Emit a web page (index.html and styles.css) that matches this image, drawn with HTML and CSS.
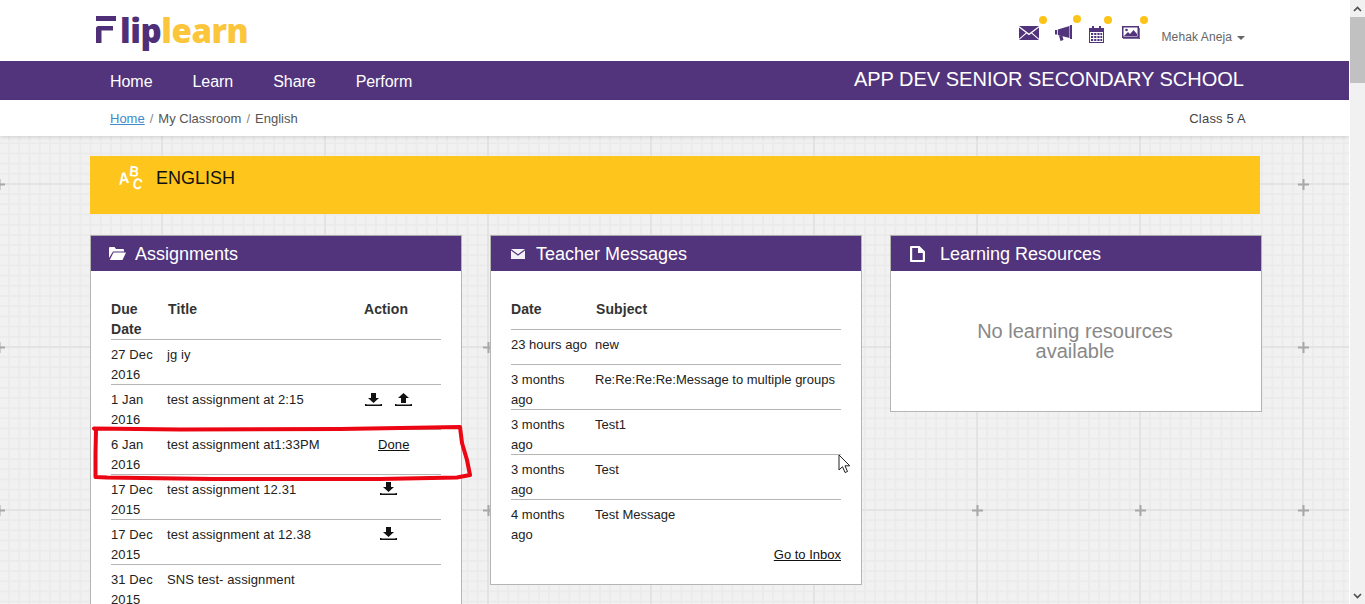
FILE: index.html
```html
<!DOCTYPE html>
<html lang="en">
<head>
<meta charset="utf-8">
<title>Fliplearn - English</title>
<link rel="stylesheet" href="styles.css">
</head>
<body>
<div class="page">
  <div class="main">
    <header class="top">
      <div class="logo"><svg class="logo-f" viewBox="0 0 20 27" width="20" height="27"><path d="M0 27V12.500a2.500 2.500 0 0 1 2.500-2.500H17v4.500H5.500V27zM0 0h20v5H0z" fill="#4f2f78"/></svg><span class="logo-flip">lip</span><span class="logo-learn">learn</span></div>
      <div class="tools">
        <a class="tool tool-mail"><svg viewBox="0 0 20 14" width="20" height="14"><path d="M0 0h20L10 7.600z" fill="#52347c"/><path d="M0 1.400v11.400L6.800 6.700zM20 1.400v11.400l-6.800-6.100zM7.600 7.500 0 14h20l-7.600-6.500L10 9.300z" fill="#52347c"/></svg><i class="dot"></i></a>
        <a class="tool tool-horn"><svg viewBox="0 0 18 16" width="18" height="16"><path d="M0 5h2v4.500H0zM2.800 4.500 14.500 1v12L2.800 10zM4 10.500l3.500.8 1 3.700-3 1z" fill="#52347c"/><path d="M15 0h2v14h-2z" fill="#52347c"/></svg><i class="dot"></i></a>
        <a class="tool tool-cal"><svg viewBox="0 0 15 17" width="15" height="17"><path d="M0 2h15v15H0zM1 6v10h13V6z" fill="#52347c"/><path d="M3 0h2v3H3zM10 0h2v3h-2z" fill="#52347c"/><path d="M2 7h2.200v2H2zM5.200 7h2.200v2H5.200zM8.400 7h2.200v2H8.400zM11.400 7h1.800v2h-1.800zM2 10h2.200v2H2zM5.200 10h2.200v2H5.200zM8.400 10h2.200v2H8.400zM11.400 10h1.800v2h-1.800zM2 13h2.200v2H2zM5.200 13h2.200v2H5.200zM8.400 13h2.200v2H8.400zM11.400 13h1.800v2h-1.800z" fill="#52347c"/></svg><i class="dot"></i></a>
        <a class="tool tool-img"><svg viewBox="0 0 18 15" width="18" height="15"><path d="M0 0h17v12H0zM1.500 1.500v9h14v-9z" fill="#52347c"/><path d="M1 13h17V2h-.7v10.300H1z" fill="#52347c"/><path d="M2 10l4-4 2 2 3.500-4L15 8v2z" fill="#52347c"/><circle cx="4.500" cy="4" r="1.300" fill="#52347c"/></svg><i class="dot"></i></a>
        <a class="user">Mehak Aneja<i class="caret"></i></a>
      </div>
    </header>
    <nav class="nav">
      <ul class="nav-links">
        <li>Home</li>
        <li>Learn</li>
        <li>Share</li>
        <li>Perform</li>
      </ul>
      <div class="school">APP DEV SENIOR SECONDARY SCHOOL</div>
    </nav>
    <div class="crumbs">
      <div class="crumb-list"><a class="crumb-home">Home</a><span class="sep">/</span><span>My Classroom</span><span class="sep">/</span><span>English</span></div>
      <div class="class-name">Class 5 A</div>
    </div>
    <main class="content">
      <section class="banner">
        <svg class="abc" viewBox="0 0 26 26" width="26" height="26"><g fill="#fff" font-family="Liberation Sans, sans-serif" font-weight="700" font-size="13"><text transform="translate(0 21) rotate(-12) skewX(-8) scale(1.15 1.25)">A</text><text transform="translate(10 12) rotate(6) scale(1 1.15)">B</text><text transform="translate(13 24) rotate(12) scale(1 1.2)">C</text></g></svg>
        <h1 class="banner-title">ENGLISH</h1>
      </section>
      <div class="panels">
        <section class="panel panel-assign">
          <h2 class="panel-head"><svg class="ph-icon" viewBox="0 0 17 13" width="17" height="13"><path d="M0 1a1 1 0 0 1 1-1h4.500l1.500 2h7a1 1 0 0 1 1 1v1.500H4L0 11z" fill="#fff"/><path d="M4.500 5.500H17L13.500 13H.8z" fill="#fff"/></svg><span>Assignments</span></h2>
          <div class="panel-body">
            <table class="tbl tbl-a">
              <thead><tr><th class="c-date">Due Date</th><th class="c-title">Title</th><th class="c-act">Action</th></tr></thead>
              <tbody>
                <tr><td>27 Dec 2016</td><td>jg iy</td><td></td></tr>
                <tr><td>1 Jan 2016</td><td>test assignment at 2:15</td><td class="acts acts-two"><svg class="ic" viewBox="0 0 17 13" width="17" height="13"><path d="M6 0h5v5h3l-5.500 5L3 5h3zM0 11h1.500v.5h14V11H17v2H0z" fill="#111"/></svg><svg class="ic" viewBox="0 0 17 13" width="17" height="13"><path d="M6 10h5V5h3L8.500 0 3 5h3zM0 11h1.500v.5h14V11H17v2H0z" fill="#111"/></svg></td></tr>
                <tr><td>6 Jan 2016</td><td>test assignment at1:33PM</td><td class="acts acts-done"><a class="link">Done</a></td></tr>
                <tr><td>17 Dec 2015</td><td>test assignment 12.31</td><td class="acts acts-one"><svg class="ic" viewBox="0 0 17 13" width="17" height="13"><path d="M6 0h5v5h3l-5.500 5L3 5h3zM0 11h1.500v.5h14V11H17v2H0z" fill="#111"/></svg></td></tr>
                <tr><td>17 Dec 2015</td><td>test assignment at 12.38</td><td class="acts acts-one"><svg class="ic" viewBox="0 0 17 13" width="17" height="13"><path d="M6 0h5v5h3l-5.500 5L3 5h3zM0 11h1.500v.5h14V11H17v2H0z" fill="#111"/></svg></td></tr>
                <tr><td>31 Dec 2015</td><td>SNS test- assignment</td><td></td></tr>
              </tbody>
            </table>
          </div>
        </section>
        <section class="panel panel-msg">
          <h2 class="panel-head"><svg class="ph-icon ph-mail" viewBox="0 0 14 10" width="14" height="10"><path d="M0 0h14L7 5.300zM0 1.500v8.500h14V1.500L7 6.800z" fill="#f4f0f8"/></svg><span>Teacher Messages</span></h2>
          <div class="panel-body">
            <table class="tbl tbl-m">
              <thead><tr><th class="m-date">Date</th><th>Subject</th></tr></thead>
              <tbody>
                <tr class="row-short"><td>23 hours ago</td><td>new</td></tr>
                <tr><td>3 months ago</td><td>Re:Re:Re:Re:Message to multiple groups</td></tr>
                <tr><td>3 months ago</td><td>Test1</td></tr>
                <tr><td>3 months ago</td><td>Test</td></tr>
                <tr><td>4 months ago</td><td>Test Message</td></tr>
              </tbody>
            </table>
            <div class="inbox"><a class="link">Go to Inbox</a></div>
          </div>
        </section>
        <section class="panel panel-res">
          <h2 class="panel-head"><svg class="ph-icon ph-file" viewBox="0 0 15 16" width="15" height="16"><path d="M1 0h8.500L15 5.500V15a1 1 0 0 1-1 1H1a1 1 0 0 1-1-1V1a1 1 0 0 1 1-1zm1.200 2v12h10.600V7H8V2z" fill="#fff"/></svg><span>Learning Resources</span></h2>
          <div class="empty">No learning resources<br>available</div>
        </section>
      </div>
    </main>
    <svg class="redmark" viewBox="90 420 385 65" width="385" height="65"><path d="M94 428.500 180 429.500 340 429 460 427 462 443 467 460 470 475 457 477.500 380 479 213 479 107 477.500 95.500 477 95.500 453 96 430z" fill="none" stroke="#ec0512" stroke-width="4" stroke-linejoin="round"/></svg>
    <svg class="cursor" viewBox="0 0 13 20" width="13" height="20"><path d="M1 1v15l3.500-3.300L7 18.500l2.500-1L7 11.800h4.800z" fill="#fff" stroke="#222" stroke-width="1"/></svg>
  </div>
  <div class="scrollbar">
    <div class="sb-arrow"><svg viewBox="0 0 9 6" width="9" height="6"><path d="M1 5l3.500-3.500L8 5" fill="none" stroke="#505050" stroke-width="1.700"/></svg></div>
    <div class="sb-thumb"></div>
    <div class="sb-track"></div>
    <div class="sb-arrow"><svg viewBox="0 0 9 6" width="9" height="6"><path d="M1 1l3.500 3.500L8 1" fill="none" stroke="#505050" stroke-width="1.700"/></svg></div>
  </div>
</div>
</body>
</html>
```
FILE: styles.css
```css
* { box-sizing: border-box; }
html, body { margin: 0; padding: 0; height: 604px; overflow: hidden; }
body { font-family: "Liberation Sans", Arial, sans-serif; color: #333; background: #fff; }
a { color: inherit; }
.page { display: flex; width: 1365px; height: 604px; overflow: hidden; }
.main {
  position: relative;
  width: 1349px;
  height: 604px;
  overflow: hidden;
  background-color: #f1f1f1;
  background-image:
    url("data:image/svg+xml,%3Csvg xmlns='http://www.w3.org/2000/svg' width='163' height='163'%3E%3Cpath d='M76 80.500h11v2H76zM80.500 76h2v11h-2z' fill='%23a8a8a8'/%3E%3C/svg%3E"),
    linear-gradient(to right, #e3e3e3 2px, transparent 2px),
    linear-gradient(to bottom, #e3e3e3 2px, transparent 2px),
    linear-gradient(to right, #ebebeb 2px, transparent 2px),
    linear-gradient(to bottom, #ebebeb 2px, transparent 2px);
  background-size: 163px 163px, 163px 163px, 163px 163px, 10.1875px 10.1875px, 10.1875px 10.1875px;
  background-position: 80.500px -60.500px, -2px 0, 0 20px, -2px 0, 0 20px;
}
.scrollbar { width: 16px; height: 604px; display: flex; flex-direction: column; background: #f1f1f1; border-left: 1px solid #fff; }
.sb-arrow { height: 17px; display: flex; align-items: center; justify-content: center; }
.sb-thumb { height: 66px; background: #c1c1c1; }
.sb-track { flex: 1; }

.top { height: 61px; background: #fff; display: flex; justify-content: space-between; padding: 0 104px 0 96px; }
.logo { font-family: "Open Sans", sans-serif; font-weight: 800; font-size: 33px; line-height: 61px; letter-spacing: -0.45px; display: flex; height: 61px; }
.logo-f { margin: 16px 4px 0 0; }
.logo-flip { color: #4f2f78; }
.logo-learn { color: #fcc63c; }
.tools { display: flex; align-items: flex-start; padding-top: 25px; }
.tool { position: relative; display: block; line-height: 0; }
.tool-mail { margin-right: 16px; margin-top: 1px; }
.tool-horn { margin-right: 16px; }
.tool-cal { margin-right: 18px; margin-top: 1px; }
.tool-img { margin-right: 22px; margin-top: 1px; }
.dot { position: absolute; width: 8px; height: 8px; border-radius: 50%; background: #fcc419; right: -8px; top: -10px; }
.user { font-size: 12px; color: #666; line-height: 14px; margin-top: 5px; white-space: nowrap; letter-spacing: 0.1px; }
.caret { display: inline-block; width: 0; height: 0; margin-left: 5px; vertical-align: 1px; border-top: 4px solid #666; border-left: 4px solid transparent; border-right: 4px solid transparent; }

.nav { height: 39px; background: #52347c; color: #fff; display: flex; justify-content: space-between; align-items: center; padding: 0 105px 0 110px; }
.nav-links { list-style: none; display: flex; gap: 40px; margin: 0; padding: 3px 0 0; font-size: 16px; letter-spacing: -0.05px; }
.school { font-size: 20px; margin-top: -2px; }

.crumbs { height: 36px; background: #fff; display: flex; justify-content: space-between; align-items: center; padding: 0 103px 0 110px; font-size: 13px; color: #555; box-shadow: 0 1px 4px rgba(0,0,0,.15); position: relative; }
.crumb-list { display: flex; }
.crumb-home { color: #428bca; text-decoration: underline; }
.sep { margin: 0 5px; color: #888; }
.class-name { color: #444; letter-spacing: 0.2px; }

.content { padding: 20px 0 0 90px; }
.banner { width: 1170px; height: 58px; background: #fec51d; display: flex; align-items: flex-start; padding: 8px 0 0 29px; }
.abc { display: block; overflow: visible; }
.banner-title { margin: 4px 0 0 11px; font-weight: 400; font-size: 18px; line-height: 20px; color: #111; }

.panels { display: flex; align-items: flex-start; gap: 28px; margin-top: 21px; }
.panel { width: 372px; background: #fff; border: 1px solid #b5b5b5; border-top-color: #aaa; }
.panel-assign { height: 600px; }
.panel-msg { height: 350px; }
.panel-res { height: 177px; }
.panel-head { margin: 0; height: 35px; background: #52347c; color: #fff; font-weight: 400; font-size: 18px; line-height: 36px; display: flex; align-items: center; padding-left: 18px; }
.ph-icon { margin-right: 9px; }
.ph-mail { margin-left: 2px; margin-right: 11px; }
.ph-file { margin-left: 1px; margin-right: 15px; }
.panel-body { padding: 28px 20px 0; }

.tbl { border-collapse: collapse; width: 330px; table-layout: fixed; font-size: 13px; line-height: 20px; color: #222; }
.tbl-a { letter-spacing: 0.1px; }
.tbl th { text-align: left; vertical-align: top; font-weight: 700; font-size: 14px; color: #333; padding: 0 0 0 1px; letter-spacing: 0.1px; }
.tbl th.c-date, .tbl th.m-date { padding-left: 0; }
.tbl-a th { height: 40px; }
.tbl-m th { height: 30px; }
.tbl td { vertical-align: top; padding: 5px 0 0; height: 45px; border-top: 1px solid #b5b5b5; }
.tbl td::after { content: ""; display: block; margin-top: -1px; }
.tbl-m tr.row-short td { height: 35px; }
.tbl-m td:first-child { padding-right: 8px; }
.c-date { width: 56px; }
.c-act { width: 78px; }
.m-date { width: 84px; }
.tbl td.acts-two { padding-left: 2px; white-space: nowrap; }
.tbl td.acts-one { padding-left: 17px; }
.tbl td.acts-done { padding-left: 15px; }
.ic { display: inline-block; vertical-align: top; margin-top: 2px; }
.acts-two .ic { margin-top: 3px; }
.acts-two .ic + .ic { margin-left: 13px; }
.link { text-decoration: underline; color: #111; }
.inbox { text-align: right; font-size: 13px; line-height: 20px; color: #111; margin-top: 1px; }
.empty { text-align: center; font-size: 20px; line-height: 20px; color: #888; padding: 50px 2px 0 0; }

.redmark { position: absolute; left: 90px; top: 420px; }
.cursor { position: absolute; left: 838px; top: 454px; }
```
